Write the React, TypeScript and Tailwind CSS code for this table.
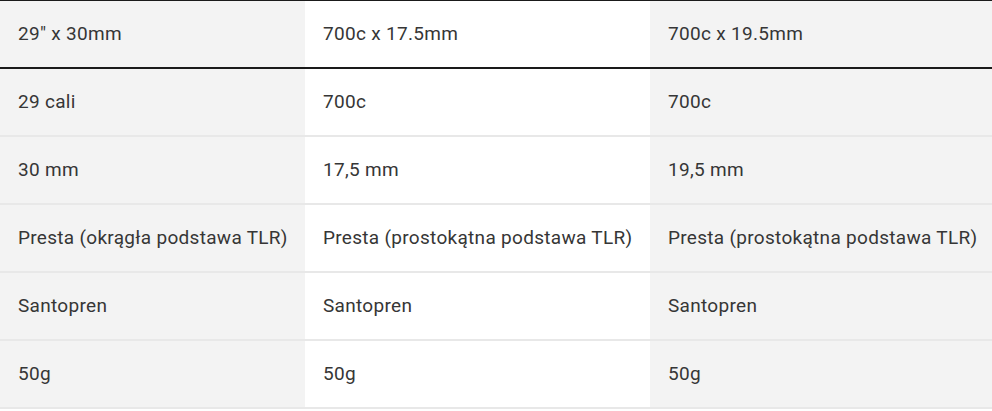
const header = ['29" x 30mm', '700c x 17.5mm', '700c x 19.5mm']

const rows = [
  ['29 cali', '700c', '700c'],
  ['30 mm', '17,5 mm', '19,5 mm'],
  ['Presta (okrągła podstawa TLR)', 'Presta (prostokątna podstawa TLR)', 'Presta (prostokątna podstawa TLR)'],
  ['Santopren', 'Santopren', 'Santopren'],
  ['50g', '50g', '50g'],
]

const colBg = ['bg-[#f3f3f3]', 'bg-white', 'bg-[#f3f3f3]']

function Row({ cells, head }: { cells: string[]; head?: boolean }) {
  return (
    <div
      className={
        head
          ? 'grid grid-cols-[305px_345px_1fr] border-t border-b-2 border-t-[#1a1a1a] border-b-[#1a1a1a]'
          : 'grid grid-cols-[305px_345px_1fr] border-b-2 border-[#e8e8e8]'
      }
    >
      {cells.map((c, i) => (
        <div
          key={i}
          className={`${colBg[i]} flex h-[66px] items-center pl-[18px] text-[19px] tracking-[0.3px] text-[#363636]`}
        >
          {c}
        </div>
      ))}
    </div>
  )
}

export default function App() {
  return (
    <div className="w-[992px] bg-white font-['Roboto',sans-serif]">
      <Row cells={header} head />
      {rows.map((r, i) => (
        <Row key={i} cells={r} />
      ))}
    </div>
  )
}
